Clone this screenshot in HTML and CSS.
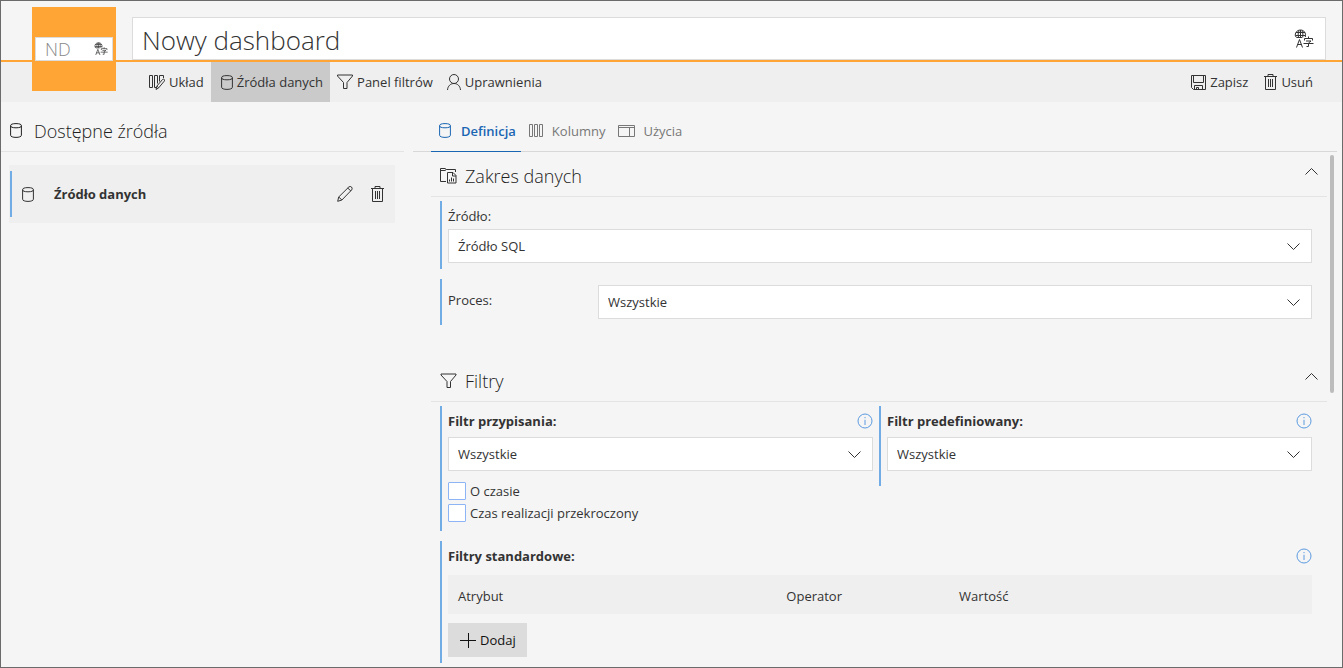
FILE: index.html
```html
<!DOCTYPE html>
<html lang="pl">
<head>
<meta charset="utf-8">
<meta name="viewport" content="width=device-width, initial-scale=1">
<title>Nowy dashboard</title>
<link rel="stylesheet" href="styles.css">
</head>
<body>
<svg class="sprite" aria-hidden="true">
  <symbol id="i-db" viewBox="0 0 12 15"><ellipse cx="6" cy="2.7" rx="5.4" ry="2.1"/><path d="M.6 2.7V12.3C.6 13.6 3 14.4 6 14.4S11.4 13.6 11.4 12.3V2.7"/></symbol>
  <symbol id="i-layout" viewBox="0 0 16 16"><path d="M.5 1.5h3v12h-3zM7 13.500H5.500v-12h3v8M10.500 7.500v-6h4v2.500M7 15.500l.8-3.300 5.700-6.700q.9-.8 1.700-.1t.1 1.700l-5.600 6.700zM8 12.200l1.700 1.600"/></symbol>
  <symbol id="i-filter" viewBox="0 0 16 16"><path d="M.5 1h15v1L10 8.500V14.500H6.500V8.500L.5 2z"/></symbol>
  <symbol id="i-user" viewBox="0 0 14 16"><circle cx="7" cy="5" r="4.500"/><path d="M.5 16C.8 12 3.500 9.500 7 9.500S13.200 12 13.500 16"/></symbol>
  <symbol id="i-save" viewBox="0 0 15 15"><path d="M.5 .5h14v14H2.500l-2-2zM2.500 .5v7h10v-7M3.500 14.500v-4h8v4M5.500 14v-1.500h2v1.500"/></symbol>
  <symbol id="i-trash" viewBox="0 0 13 16"><path d="M0 2.500h13M4 2.500v-2h5v2M1.500 2.500v13h10v-13M4.500 5v8M6.500 5v8M8.500 5v8"/></symbol>
  <symbol id="i-pencil" viewBox="0 0 16 16"><path d="M.7 15.300l1-4.300L11.800 1q1.500-1.200 2.700 0t.2 2.900L4.900 14zM1.700 11l3.200 3M10.700 2l3.200 3"/></symbol>
  <symbol id="i-columns" viewBox="0 0 15 13"><path d="M.5 .5h3v12h-3zM5.500 .5h3v12h-3zM10.500 .5h3v12h-3z"/></symbol>
  <symbol id="i-window" viewBox="0 0 17 12"><path d="M.5 .5h16v11H.5zM.5 2.500h16M11.500 2.500v9"/></symbol>
  <symbol id="i-scope" viewBox="0 0 17 16"><path d="M6 13.500H.5V.5h4.500l1.500 1H15.500V4M.5 2.500h4.500l1.500-1M7.500 4.500h5.500l3 3v7.500H7.500zM12.500 4.500v3.500h3.500M9.500 13.500v-2M11.500 13.500v-4M13.500 13.500v-3"/></symbol>
  <symbol id="i-up" viewBox="0 0 13 7"><path d="M.5 6.500l6-6 6 6"/></symbol>
  <symbol id="i-down" viewBox="0 0 13 7"><path d="M.5 .5l6 6 6-6"/></symbol>
  <symbol id="i-info" viewBox="0 0 16 16"><circle cx="8" cy="8" r="7"/><path d="M8 6.800V12M8 4v1.200"/></symbol>
  <symbol id="i-plus" viewBox="0 0 16 16"><path d="M0 8.500h16M8.500 1v15"/></symbol>
  <symbol id="i-translate" viewBox="0 0 20 20"><path d="M11.300 8C12.300 4 10 1 6.500 1S.500 4 1.500 7.500L3 8.500H8M2 3.500h9M1.500 6.500h10M6.500 1v7.500M5 1.500Q3.500 5 4.500 8.500M8 1.500Q9.500 5 8.700 8.500M2.500 18.500L5.500 10.500l3 8M3.500 15.500h4M14.500 7.500v2M10.500 11.500v-2h8v2M12 12h5l-2.500 2v3.500h-2M9.500 14.500h10"/></symbol>
</svg>

<header class="header">
  <div class="brand">
    <div class="brand-field">
      <input class="brand-input" type="text" value="ND" aria-label="Skrót">
      <button class="icon-btn" type="button" aria-label="Tłumaczenia skrótu"><svg class="icon translate-sm"><use href="#i-translate"/></svg></button>
    </div>
  </div>
  <div class="title-field">
    <input class="title-input" type="text" value="Nowy dashboard" aria-label="Nazwa">
    <button class="icon-btn" type="button" aria-label="Tłumaczenia nazwy"><svg class="icon translate"><use href="#i-translate"/></svg></button>
  </div>
</header>

<nav class="toolbar">
  <button class="tool" type="button"><svg class="icon s16"><use href="#i-layout"/></svg>Układ</button>
  <button class="tool tool-active" type="button"><svg class="icon db"><use href="#i-db"/></svg>Źródła danych</button>
  <button class="tool" type="button"><svg class="icon s16"><use href="#i-filter"/></svg>Panel filtrów</button>
  <button class="tool" type="button"><svg class="icon user"><use href="#i-user"/></svg>Uprawnienia</button>
  <span class="spacer"></span>
  <button class="tool" type="button"><svg class="icon s15"><use href="#i-save"/></svg>Zapisz</button>
  <button class="tool tool-delete" type="button"><svg class="icon trash"><use href="#i-trash"/></svg>Usuń</button>
</nav>

<div class="main">
  <aside class="sources">
    <h2 class="sources-title"><svg class="icon db"><use href="#i-db"/></svg>Dostępne źródła</h2>
    <div class="source">
      <span class="source-mark"></span>
      <svg class="icon db"><use href="#i-db"/></svg>
      <span class="source-name">Źródło danych</span>
      <button class="icon-btn" type="button" aria-label="Edytuj"><svg class="icon s16"><use href="#i-pencil"/></svg></button>
      <button class="icon-btn" type="button" aria-label="Usuń źródło"><svg class="icon trash"><use href="#i-trash"/></svg></button>
    </div>
  </aside>

  <main class="details">
    <div class="tabs" role="tablist">
      <button class="tab tab-active" type="button" role="tab" aria-selected="true"><svg class="icon db"><use href="#i-db"/></svg>Definicja</button>
      <button class="tab" type="button" role="tab" aria-selected="false"><svg class="icon cols"><use href="#i-columns"/></svg>Kolumny</button>
      <button class="tab" type="button" role="tab" aria-selected="false"><svg class="icon win"><use href="#i-window"/></svg>Użycia</button>
    </div>

    <div class="scroll">
      <div class="content">
        <section class="section">
          <div class="section-head">
            <svg class="icon scope"><use href="#i-scope"/></svg>
            <h3 class="section-title">Zakres danych</h3>
            <button class="icon-btn collapse" type="button" aria-label="Zwiń zakres danych"><svg class="icon chevron"><use href="#i-up"/></svg></button>
          </div>
          <div class="section-body">
            <div class="block block-source">
              <label class="label" for="source">Źródło:</label>
              <div class="select-wrap"><select class="select" id="source"><option>Źródło SQL</option></select><svg class="icon chevron select-arrow"><use href="#i-down"/></svg></div>
            </div>
            <div class="block block-row">
              <label class="label-side" for="process">Proces:</label>
              <div class="select-wrap"><select class="select" id="process"><option>Wszystkie</option></select><svg class="icon chevron select-arrow"><use href="#i-down"/></svg></div>
            </div>
          </div>
        </section>

        <section class="section">
          <div class="section-head">
            <svg class="icon scope"><use href="#i-filter"/></svg>
            <h3 class="section-title">Filtry</h3>
            <button class="icon-btn collapse" type="button" aria-label="Zwiń filtry"><svg class="icon chevron"><use href="#i-up"/></svg></button>
          </div>
          <div class="section-body">
            <div class="pair">
              <div class="block">
                <div class="label-row">
                  <label class="label-bold" for="assigned">Filtr przypisania:</label>
                  <button class="icon-btn info" type="button" aria-label="Informacja o filtrze przypisania"><svg class="icon s16"><use href="#i-info"/></svg></button>
                </div>
                <div class="select-wrap"><select class="select" id="assigned"><option>Wszystkie</option></select><svg class="icon chevron select-arrow"><use href="#i-down"/></svg></div>
                <div class="checks">
                  <label class="check"><input class="checkbox" type="checkbox">O czasie</label>
                  <label class="check"><input class="checkbox" type="checkbox">Czas realizacji przekroczony</label>
                </div>
              </div>
              <div class="block block-predefined">
                <div class="label-row">
                  <label class="label-bold" for="predefined">Filtr predefiniowany:</label>
                  <button class="icon-btn info" type="button" aria-label="Informacja o filtrze predefiniowanym"><svg class="icon s16"><use href="#i-info"/></svg></button>
                </div>
                <div class="select-wrap"><select class="select" id="predefined"><option>Wszystkie</option></select><svg class="icon chevron select-arrow"><use href="#i-down"/></svg></div>
              </div>
            </div>
            <div class="block block-standard">
              <div class="label-row label-row-table">
                <span class="label-bold" id="standard">Filtry standardowe:</span>
                <button class="icon-btn info" type="button" aria-label="Informacja o filtrach standardowych"><svg class="icon s16"><use href="#i-info"/></svg></button>
              </div>
              <table class="filters" aria-labelledby="standard">
                <thead><tr><th class="col-attr">Atrybut</th><th class="col-op">Operator</th><th>Wartość</th></tr></thead>
              </table>
              <button class="add" type="button"><svg class="icon s16"><use href="#i-plus"/></svg>Dodaj</button>
            </div>
          </div>
        </section>
      </div>
      <div class="track"><div class="thumb"></div></div>
    </div>
  </main>
</div>
</body>
</html>
```
FILE: styles.css
```css
* { box-sizing: border-box; }

body {
  margin: 0;
  min-height: 100vh;
  border: 1px solid #6b6b6b;
  background: #f5f5f5;
  color: #333;
  font: 13px/20px "Open Sans", "Noto Sans", sans-serif;
}

button, input, select { font: inherit; color: inherit; }
button { border: 0; background: none; padding: 0; cursor: pointer; }
h2, h3 { margin: 0; color: #222; font-weight: 350; font-size: 18px; line-height: 24px; }

.sprite { position: absolute; width: 0; height: 0; }
.icon { flex: none; display: block; fill: none; stroke: currentColor; stroke-width: 1; }
.s15 { width: 15px; height: 15px; }
.s16 { width: 16px; height: 16px; }
.db { width: 12px; height: 15px; }
.user { width: 14px; height: 16px; }
.trash { width: 13px; height: 16px; }
.cols { width: 15px; height: 13px; }
.win { width: 17px; height: 12px; }
.scope { width: 17px; height: 16px; }
.chevron { width: 13px; height: 7px; }
.translate { width: 20px; height: 20px; }
.translate-sm { width: 14px; height: 14px; }
.icon-btn { flex: none; display: flex; align-items: center; justify-content: center; }

.header {
  position: relative;
  padding: 16px 16px 0 131px;
  border-bottom: 2px solid #ffa536;
}
.title-field {
  display: flex;
  align-items: center;
  height: 43px;
  padding: 0 11px 0 9px;
  background: #fff;
  border: 1px solid #dcdcdc;
}
.title-input {
  flex: 1;
  min-width: 0;
  border: 0;
  padding: 2px 0 0;
  background: none;
  font-size: 26px;
  line-height: 38px;
  font-weight: 300;
}
.brand {
  position: absolute;
  top: 6px;
  left: 31px;
  z-index: 1;
  width: 84px;
  height: 84px;
  padding: 30px 3px;
  background: #ffa536;
}
.brand-field {
  display: flex;
  align-items: center;
  height: 24px;
  padding: 0 4px 0 9px;
  background: #fff;
  border: 1px solid #dcdcdc;
}
.brand-input {
  flex: 1;
  min-width: 0;
  border: 0;
  padding: 0;
  background: none;
  color: #888;
  font-size: 18px;
  line-height: 22px;
  font-weight: 300;
}

.toolbar { display: flex; height: 40px; padding: 0 22px 0 141px; background: #efefef; }
.tool { display: flex; align-items: center; gap: 4px; padding: 0 7px; }
.tool-active { padding: 0 7px 0 10px; background: #cacaca; }
.tool-delete { padding-left: 9px; }
.spacer { flex: 1; }

.main { display: grid; grid-template-columns: 403fr 929fr; gap: 9px; }
.sources-title {
  display: flex;
  align-items: center;
  gap: 12px;
  height: 50px;
  padding: 8px 0 0 9px;
  border-bottom: 1px solid #e4e4e4;
}
.source {
  display: flex;
  align-items: center;
  height: 58px;
  margin: 13px 9px 0 8px;
  padding: 6px 11px 6px 1px;
  background: #efefef;
}
.source-mark { align-self: stretch; width: 2px; margin: 0 10px 0 0; background: #72ace4; }
.source-name { flex: 1; margin-left: 20px; font-weight: 700; }
.source .icon-btn + .icon-btn { margin-left: 18px; }

.details { min-width: 0; padding-right: 5px; }
.tabs { display: flex; height: 50px; padding-left: 18px; border-bottom: 1px solid #d8d8d8; }
.tab {
  display: flex;
  align-items: center;
  gap: 8px;
  height: 50px;
  padding: 8px 5px 0 8px;
  border-bottom: 1px solid transparent;
  color: #777;
}
.tab-active { gap: 10px; border-color: #1b66b3; color: #1b66b3; font-weight: 600; }

.scroll { display: flex; gap: 3px; padding: 0 3px 0 18px; }
.content { flex: 1; min-width: 0; }
.track { width: 4px; padding-top: 3px; }
.thumb { height: 238px; border-radius: 2px; background: #bcbcbc; }

.section-head {
  display: flex;
  align-items: center;
  gap: 8px;
  height: 45px;
  padding: 3px 9px 0;
  border-bottom: 1px solid #e4e4e4;
}
.section-title { flex: 1; }
.collapse { height: 24px; padding-bottom: 8px; }
.section + .section { margin-top: 32px; }
.section-body { padding: 4px 15px 0 9px; }

.block { border-left: 2px solid #72ace4; padding: 5px 0 6px 6px; }
.label { display: block; margin-bottom: 3px; }
.block-row { display: flex; gap: 10px; margin-top: 10px; padding: 6px 0 6px 6px; }
.label-side { width: 140px; padding-top: 5px; }
.select-wrap { position: relative; flex: 1; }
.select {
  display: block;
  appearance: none;
  width: 100%;
  height: 34px;
  padding: 0 36px 0 9px;
  border: 1px solid #dcdcdc;
  border-radius: 0;
  background: #fff;
}
.select-arrow { position: absolute; top: 14px; right: 12px; pointer-events: none; }

.pair { display: grid; grid-template-columns: 1fr 1fr; gap: 6px; align-items: start; }
.pair .block { padding-bottom: 9px; }
.pair .block-predefined { padding-bottom: 15px; }
.label-row { display: flex; align-items: center; justify-content: space-between; margin-bottom: 6px; }
.label-bold { font-weight: 700; }
.info { color: #5c9be0; }
.checks { display: grid; gap: 4px; margin-top: 11px; }
.check { display: flex; align-items: center; gap: 4px; height: 18px; }
.checkbox {
  appearance: none;
  width: 18px;
  height: 18px;
  margin: 0;
  border: 1px solid #8db4f5;
  border-radius: 1px;
  background: #fff;
}
.block-standard { margin-top: 10px; }
.label-row-table { margin-bottom: 9px; }
.filters { width: 100%; border-collapse: collapse; table-layout: fixed; background: #efefef; }
.filters th { height: 39px; padding: 3px 10px 0; text-align: left; font-weight: 500; }
.col-attr { width: 38%; }
.col-op { width: 20%; }
.add {
  display: flex;
  align-items: center;
  gap: 4px;
  height: 34px;
  margin-top: 9px;
  padding: 0 11px 0 12px;
  background: #dcdcdc;
  color: #111;
}
```
